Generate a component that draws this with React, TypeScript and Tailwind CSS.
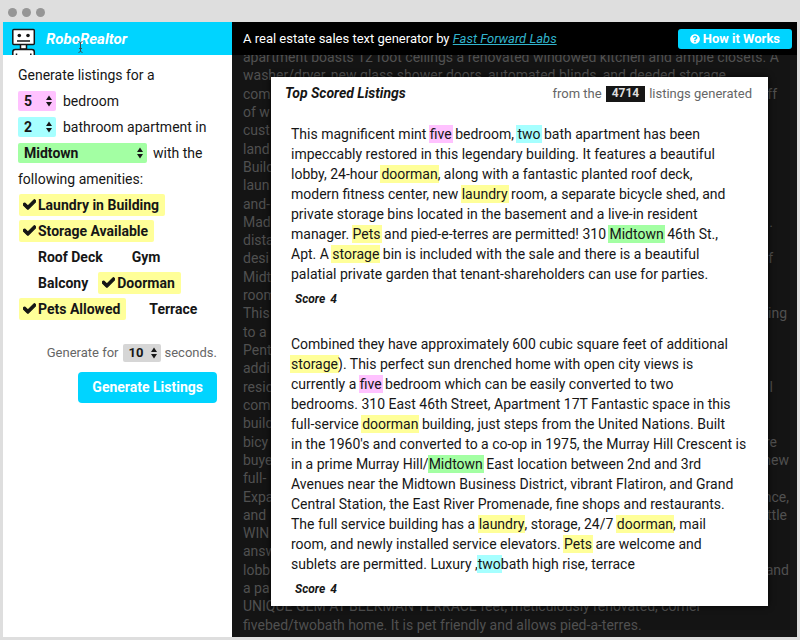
import { Fragment, useState } from 'react';
import { FaCheck, FaQuestionCircle } from 'react-icons/fa';

type BackdropLine = { start: string; end?: string; pad?: string };

const backdrop: BackdropLine[] = [
  { start: 'apartment boasts 12 foot ceilings a renovated windowed kitchen and ample closets. A' },
  { start: 'washer/dryer, new glass shower doors, automated blinds, and deeded storage' },
  { start: 'com', end: 'off', pad: 'pr-3' },
  { start: 'of w' },
  { start: 'cust' },
  { start: 'land' },
  { start: 'Build' },
  { start: 'laun' },
  { start: 'and-' },
  { start: 'Mad', end: '.', pad: 'pr-4' },
  { start: 'dista' },
  { start: 'desi', end: 'of', pad: 'pr-4' },
  { start: 'Midt' },
  { start: 'room' },
  { start: 'This', end: 'ing', pad: 'pr-0.5' },
  { start: 'to a' },
  { start: 'Pent' },
  { start: 'addi' },
  { start: 'resid', end: 'l', pad: 'pr-4' },
  { start: 'com' },
  { start: 'build' },
  { start: 'bicy', end: 're', pad: 'pr-3' },
  { start: 'buye', end: 'new' },
  { start: 'full-' },
  { start: 'Expa', end: 'nce,' },
  { start: 'and', end: 'ttle', pad: 'pr-0.5' },
  { start: 'WIN' },
  { start: 'answ' },
  { start: 'lobb', end: 'and' },
  { start: 'a pa' },
  { start: 'UNIQUE GEM AT BEEKMAN TERRACE feet, meticulously renovated, corner' },
  { start: 'fivebed/twobath home. It is pet friendly and allows pied-a-terres.' },
];

const marks: Record<string, string> = {
  bed: 'bg-[#ffc2ff]',
  bath: 'bg-[#a6ffff]',
  area: 'bg-[#a3ffa3]',
  perk: 'bg-[#ffff99]',
};

// Highlights are written as {kind:text}.
const listings = [
  {
    score: 4,
    lines: [
      'This magnificent mint {bed:five} bedroom, {bath:two} bath apartment has been',
      'impeccably restored in this legendary building. It features a beautiful',
      'lobby, 24-hour {perk:doorman}, along with a fantastic planted roof deck,',
      'modern fitness center, new {perk:laundry} room, a separate bicycle shed, and',
      'private storage bins located in the basement and a live-in resident',
      'manager. {perk:Pets} and pied-e-terres are permitted! 310 {area:Midtown} 46th St.,',
      'Apt. A {perk:storage} bin is included with the sale and there is a beautiful',
      'palatial private garden that tenant-shareholders can use for parties.',
    ],
  },
  {
    score: 4,
    lines: [
      'Combined they have approximately 600 cubic square feet of additional',
      '{perk:storage}). This perfect sun drenched home with open city views is',
      'currently a {bed:five} bedroom which can be easily converted to two',
      'bedrooms. 310 East 46th Street, Apartment 17T Fantastic space in this',
      'full-service {perk:doorman} building, just steps from the United Nations. Built',
      "in the 1960's and converted to a co-op in 1975, the Murray Hill Crescent is",
      'in a prime Murray Hill/{area:Midtown} East location between 2nd and 3rd',
      'Avenues near the Midtown Business District, vibrant Flatiron, and Grand',
      'Central Station, the East River Promenade, fine shops and restaurants.',
      'The full service building has a {perk:laundry}, storage, 24/7 {perk:doorman}, mail',
      'room, and newly installed service elevators. {perk:Pets} are welcome and',
      'sublets are permitted. Luxury ,{bath:two}bath high rise, terrace',
    ],
  },
];

function Marked({ text }: { text: string }) {
  return (
    <>
      {text.split(/(\{[^}]+\})/).map((part, i) => {
        if (!part.startsWith('{')) return <Fragment key={i}>{part}</Fragment>;
        const [kind, word] = part.slice(1, -1).split(':');
        return (
          <mark key={i} className={`-mx-px px-px py-px text-[#161616] ${marks[kind]}`}>
            {word}
          </mark>
        );
      })}
    </>
  );
}

function Picker({ label, options, className }: { label: string; options: string[]; className: string }) {
  return (
    <span className="relative inline-flex">
      <select aria-label={label} className={`appearance-none rounded-xs pl-1.5 font-bold text-[#161616] ${className}`}>
        {options.map((o) => (
          <option key={o}>{o}</option>
        ))}
      </select>
      <svg
        viewBox="0 0 6 12"
        className="pointer-events-none absolute right-1 top-1/2 h-3 w-1.5 -translate-y-1/2 fill-[#161616]"
      >
        <path d="M3 0.5 6 5H0zM3 11.5 0 7h6z" />
      </svg>
    </span>
  );
}

function Amenity({ name, initial = false }: { name: string; initial?: boolean }) {
  const [on, setOn] = useState(initial);
  return (
    <label className={`relative flex h-[22px] items-center rounded-xs pr-1.5 font-bold ${on ? 'bg-[#ffff99]' : ''}`}>
      <input
        type="checkbox"
        checked={on}
        onChange={(e) => setOn(e.target.checked)}
        className="h-4 w-[19px] shrink-0 appearance-none"
      />
      {on && (
        <FaCheck className="pointer-events-none absolute left-1 top-1 size-[13px] stroke-[#161616] [stroke-width:40]" />
      )}
      {name}
    </label>
  );
}

function Robot() {
  return (
    <svg viewBox="0 0 26 28" className="h-7 w-[26px] shrink-0 self-end" fill="#fff" stroke="#161616" strokeWidth="1.5">
      <path d="M9.500 17v5h6v-5" />
      <rect x="1.8" y="2.5" width="21.5" height="15" rx="1" />
      <path d="M1.800 29v-4q0-2.500 2.500-2.500h16.500q2.500 0 2.500 2.500V29M5.500 29v-2.500M19.800 29v-2.500" />
      <path d="M6 14h13" />
      <circle cx="8.3" cy="8.500" r="1.8" fill="#161616" stroke="none" />
      <circle cx="17" cy="8.500" r="1.8" fill="#161616" stroke="none" />
    </svg>
  );
}

export default function App() {
  return (
    <div className="flex h-screen flex-col bg-[#dedede] px-[3px] pb-[3px] font-[Roboto,'Noto_Sans',sans-serif] text-sm text-[#161616]">
      <div className="flex h-[22px] shrink-0 items-center gap-[5px] pl-[5px] pt-0.5">
        <span className="size-[9px] rounded-full bg-[#969696]" />
        <span className="size-[9px] rounded-full bg-[#969696]" />
        <span className="size-[9px] rounded-full bg-[#969696]" />
      </div>

      <div className="flex min-h-0 flex-1">
        <aside className="w-[229px] shrink-0 bg-white">
          <header className="relative flex h-[33px] items-center gap-[9px] bg-[#00d4ff] pl-2">
            <Robot />
            <h1 className="pt-0.5 text-[15px] font-bold italic text-white">RoboRealtor</h1>
            <svg viewBox="0 0 5 12" className="absolute left-[75px] top-[19px] h-3 w-[5px]" fill="none" stroke="#3c4a50">
              <path d="M0.500 0.500 2.500 1.500 4.500 0.500M2.500 1.500v9M0.500 11.500 2.500 10.500 4.500 11.500M1 7.500h3" />
            </svg>
          </header>

          <form className="px-[15px] pt-[7px]" onSubmit={(e) => e.preventDefault()}>
            <p className="flex h-[26px] items-center">Generate listings for a</p>
            <div className="flex h-[26px] items-center gap-[7px]">
              <Picker label="Bedrooms" options={['5', '4', '3', '2', '1']} className="h-5 w-[38px] bg-[#ffc2ff]" />
              bedroom
            </div>
            <div className="flex h-[26px] items-center gap-[7px]">
              <Picker label="Bathrooms" options={['2', '1', '3']} className="h-5 w-[38px] bg-[#a6ffff]" />
              bathroom apartment in
            </div>
            <div className="flex h-[26px] items-center gap-1.5">
              <Picker label="Neighborhood" options={['Midtown']} className="h-5 w-[129px] bg-[#a3ffa3]" />
              with the
            </div>
            <p className="flex h-[26px] items-center">following amenities:</p>

            <div className="flex flex-wrap gap-x-1 gap-y-1 pl-px pt-0.5">
              <Amenity name="Laundry in Building" initial />
              <Amenity name="Storage Available" initial />
              <Amenity name="Roof Deck" />
              <Amenity name="Gym" />
              <Amenity name="Balcony" />
              <Amenity name="Doorman" initial />
              <Amenity name="Pets Allowed" initial />
              <Amenity name="Terrace" />
            </div>

            <div className="flex items-center justify-end gap-1 pt-6 text-[13px] text-[#666]">
              Generate for
              <Picker label="Seconds" options={['10', '20', '30']} className="h-[18px] w-[38px] bg-[#d6d6d6]" />
              seconds.
            </div>
            <div className="flex justify-end pt-[9px]">
              <button className="h-[31px] rounded-sm bg-[#00d4ff] px-3.5 font-bold text-white">Generate Listings</button>
            </div>
          </form>
        </aside>

        <main className="relative flex min-w-0 flex-1 flex-col bg-[#141414]">
          <header className="relative z-10 flex h-[33px] shrink-0 items-center justify-between bg-black pl-[11px] pr-[5px] pt-px text-[13px] text-white">
            <p>
              A real estate sales text generator by{' '}
              <a href="#labs" className="italic text-[#32b4cd] underline">
                Fast Forward Labs
              </a>
            </p>
            <button className="flex h-5 items-center gap-[3px] rounded-[3px] bg-[#00d4ff] px-3 font-bold">
              <FaQuestionCircle className="size-2.5" />
              How it Works
            </button>
          </header>

          <div className="-mt-[7px] flex min-h-0 flex-1 flex-col justify-between pb-[3px] pl-[11px] pr-2 leading-[18px] text-[#505050]">
            {backdrop.map((line, i) => (
              <p key={i} className={`flex justify-between whitespace-nowrap ${line.pad ?? ''}`}>
                <span>{line.start}</span>
                <span>{line.end}</span>
              </p>
            ))}
          </div>

          <section className="absolute inset-x-0 top-[55px] ml-[39px] mr-[29px] bg-white pb-[9px] shadow-[0_0_6px_rgba(0,0,0,0.8)]">
            <header className="flex h-8 items-center justify-between pl-3.5 pr-4">
              <h2 className="font-bold italic">Top Scored Listings</h2>
              <p className="flex items-center gap-1 pt-0.5 text-[13px] text-[#666]">
                from the
                <b className="flex h-4 items-center bg-[#161616] px-1.5 text-[12px] text-[#ddd]">4714</b>
                listings generated
              </p>
            </header>
            <div className="flex flex-col gap-[27px] pl-5 pt-[15px]">
              {listings.map((listing, i) => (
                <article key={i}>
                  <p className="whitespace-nowrap leading-5">
                    {listing.lines.map((line, n) => (
                      <span key={n} className="block">
                        <Marked text={line} />
                      </span>
                    ))}
                  </p>
                  <p className="pl-1 pt-[7px] text-[12px] font-bold italic leading-4">
                    Score <span className="pl-0.5">{listing.score}</span>
                  </p>
                </article>
              ))}
            </div>
          </section>
        </main>
      </div>
    </div>
  );
}
